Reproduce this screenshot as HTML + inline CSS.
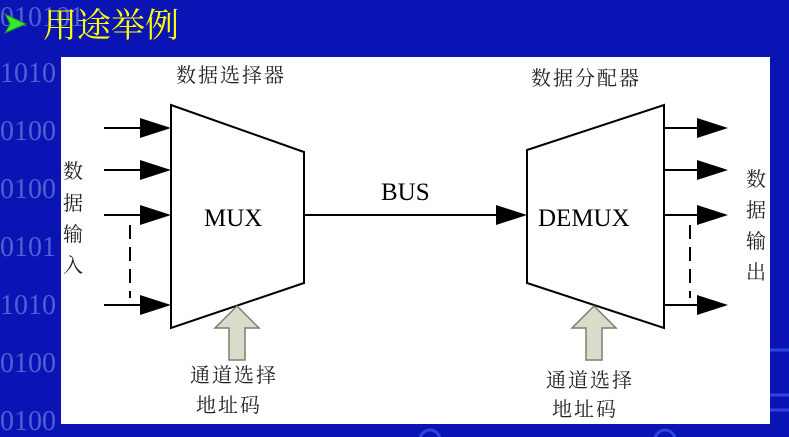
<!DOCTYPE html>
<html><head><meta charset="utf-8"><style>
body{margin:0;width:789px;height:437px;overflow:hidden;background:#0a14b4;font-family:"Liberation Serif","Noto Serif CJK SC",serif}
svg{position:absolute;left:0;top:0}
</style></head><body>
<svg width="789" height="437" viewBox="0 0 789 437">
<g fill="#6f80e0" font-size="28" font-family="Liberation Serif,serif" opacity="0.7">
<text x="0" y="26">010101</text><text x="0" y="82">1010</text><text x="0" y="140">0100</text><text x="0" y="198">0100</text><text x="0" y="256">0101</text><text x="0" y="314">1010</text><text x="0" y="372">0100</text><text x="0" y="430">0100</text>
</g>
<g stroke="#3d5ae8" stroke-width="3" fill="none" opacity="0.7">
<line x1="770" y1="350" x2="789" y2="350"/><line x1="770" y1="395" x2="789" y2="395"/><line x1="770" y1="410" x2="789" y2="410"/>
<circle cx="665" cy="440" r="10"/><circle cx="430" cy="440" r="10"/>
</g>
<polygon points="5,14 26,24 5,33 10,24" fill="#33e833" stroke="#1a8a1a" stroke-width="1"/>
<text x="43" y="37" font-size="34" fill="#ffff00" font-family="Liberation Sans,Noto Serif CJK SC,serif">用途举例</text>
<rect x="61" y="57" width="709" height="367" fill="#fff"/>
<g font-family="Noto Serif CJK SC,serif" font-size="20" fill="#222">
<text x="176" y="82" letter-spacing="2">数据选择器</text>
<text x="531" y="85" letter-spacing="2">数据分配器</text>
<text x="63" y="178">数</text><text x="63" y="210">据</text><text x="63" y="241">输</text><text x="63" y="272">入</text>
<text x="746" y="186">数</text><text x="746" y="217">据</text><text x="746" y="248">输</text><text x="746" y="279">出</text>
<text x="190" y="382" letter-spacing="2">通道选择</text><text x="196" y="412" letter-spacing="2">地址码</text>
<text x="546" y="387" letter-spacing="2">通道选择</text><text x="552" y="416" letter-spacing="2">地址码</text>
</g>
<g font-size="25" fill="#000">
<text x="204" y="226">MUX</text><text x="381" y="200">BUS</text><text x="538" y="226">DEMUX</text>
</g>
<g stroke="#000" stroke-width="2" fill="none">
<polygon points="171,105 304,152 304,283 171,328"/>
<polygon points="527,150 664,105 664,328 527,283"/>
<line x1="104" y1="128" x2="145" y2="128"/><line x1="104" y1="170" x2="145" y2="170"/><line x1="104" y1="215" x2="145" y2="215"/><line x1="104" y1="305" x2="145" y2="305"/>
<line x1="304" y1="215" x2="500" y2="215"/>
<line x1="664" y1="128" x2="700" y2="128"/><line x1="664" y1="170" x2="700" y2="170"/><line x1="664" y1="215" x2="700" y2="215"/><line x1="664" y1="305" x2="700" y2="305"/>
<line x1="130" y1="225" x2="130" y2="298" stroke-dasharray="14,8"/>
<line x1="690" y1="225" x2="690" y2="298" stroke-dasharray="14,8"/>
</g>
<g fill="#000">
<polygon points="140,118 171,128 140,138"/><polygon points="140,160 171,170 140,180"/><polygon points="140,205 171,215 140,225"/><polygon points="140,295 171,305 140,315"/>
<polygon points="496,205 527,215 496,225"/>
<polygon points="697,118 728,128 697,138"/><polygon points="697,160 728,170 697,180"/><polygon points="697,205 728,215 697,225"/><polygon points="697,295 728,305 697,315"/>
</g>
<g fill="#d8dccb" stroke="#7a7f6e" stroke-width="1.5">
<polygon points="237,306 259,328 245,328 245,360 229,360 229,328 215,328"/>
<polygon points="594,306 616,328 602,328 602,360 586,360 586,328 572,328"/>
</g>
</svg>
</body></html>
